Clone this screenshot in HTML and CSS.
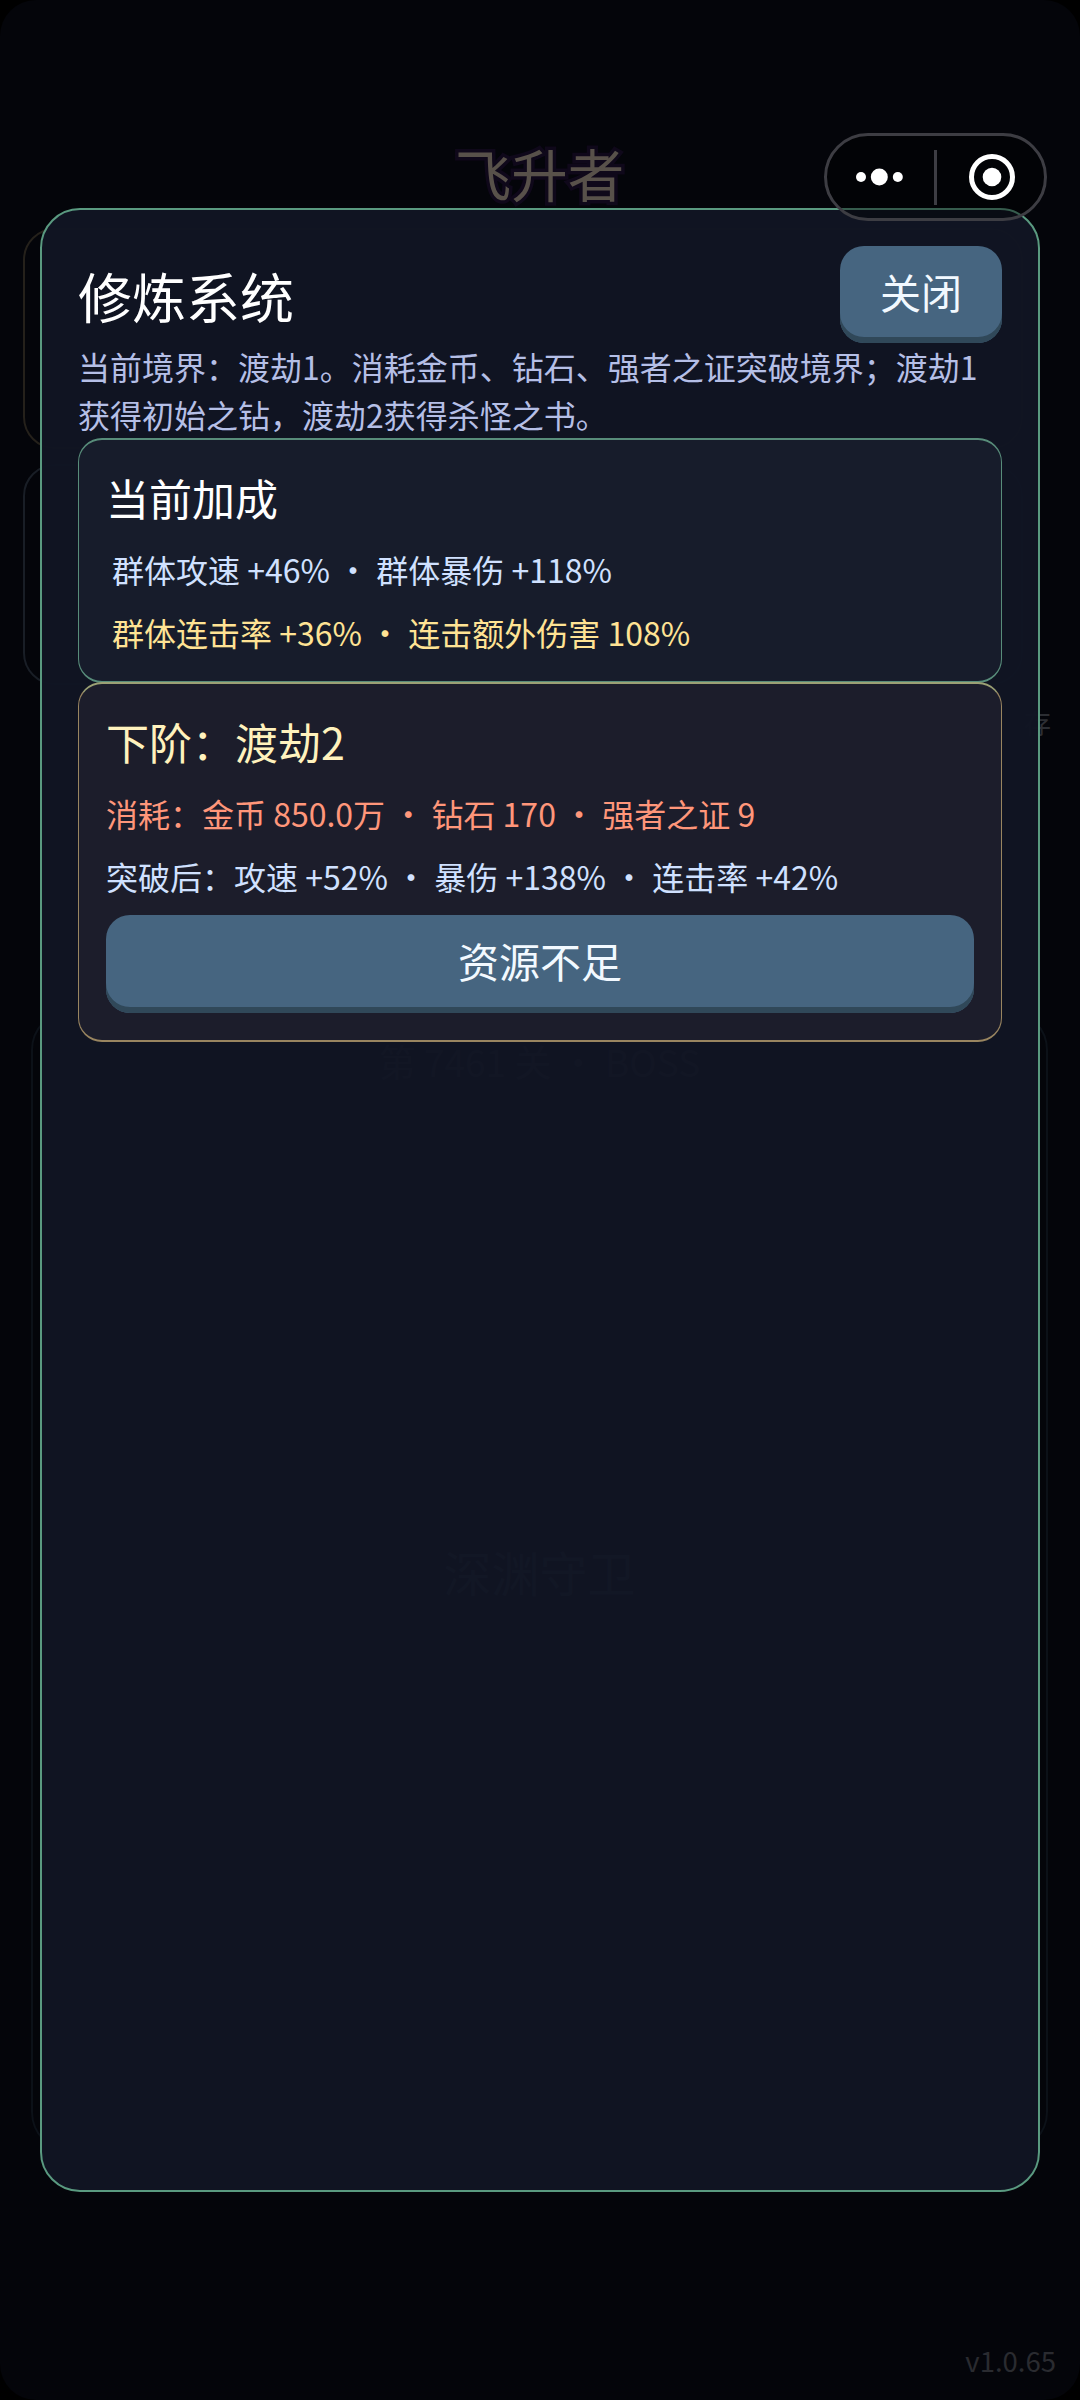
FILE: index.html
```html
<!DOCTYPE html>
<html lang="zh-CN">
<head>
<meta charset="utf-8">
<title>飞升者</title>
<link rel="stylesheet" href="styles.css">
</head>
<body>
<div class="screen">
  <main class="game">
    <h1 class="game-title">飞升者</h1>
    <section class="hud hud-gold"></section>
    <section class="hud hud-plain"></section>
    <p class="save">存</p>
    <section class="stage">
      <p class="stage-level">第 7461 关 · BOSS</p>
      <h2 class="stage-enemy">深渊守卫</h2>
    </section>
    <footer class="version">v1.0.65</footer>
  </main>

  <div class="modal">
    <header class="modal-head">
      <h2 class="modal-title">修炼系统</h2>
      <button class="btn btn-close">关闭</button>
    </header>
    <p class="desc">当前境界：渡劫1。消耗金币、钻石、强者之证突破境界；渡劫1获得初始之钻，渡劫2获得杀怪之书。</p>
    <section class="card card-green">
      <h3 class="card-title">当前加成</h3>
      <p class="row row-indent blue">群体攻速 +46% · 群体暴伤 +118%</p>
      <p class="row row-indent yellow">群体连击率 +36% · 连击额外伤害 108%</p>
    </section>
    <section class="card card-gold">
      <h3 class="card-title cream">下阶：渡劫2</h3>
      <p class="row red">消耗：金币 850.0万 · 钻石 170 · 强者之证 9</p>
      <p class="row blue">突破后：攻速 +52% · 暴伤 +138% · 连击率 +42%</p>
      <button class="btn btn-wide">资源不足</button>
    </section>
  </div>

  <div class="capsule">
    <svg class="capsule-icon" width="45" height="20" viewBox="0 0 45 20" fill="#fff">
      <circle cx="5" cy="10" r="5"/><circle cx="23.3" cy="10" r="8.5"/><circle cx="41.8" cy="10" r="5"/>
    </svg>
    <span class="capsule-line"></span>
    <svg class="capsule-icon" width="46" height="48" viewBox="1 0 46 48">
      <circle cx="24" cy="24" r="20.5" fill="none" stroke="#fff" stroke-width="5"/><circle cx="24" cy="24" r="9.3" fill="#fff"/>
    </svg>
  </div>
</div>
</body>
</html>
```
FILE: styles.css
```css
* { box-sizing: border-box; margin: 0; padding: 0; }
body {
  background: #000;
  font-family: "Noto Sans CJK SC", sans-serif;
  font-weight: 400;
}
h1, h2, h3, button { font: inherit; }

.screen {
  position: relative;
  width: 1080px;
  height: 2400px;
  overflow: hidden;
  border-radius: 36px;
  background: #04050a;
}

/* dimmed game page */
.game {
  display: flex;
  flex-direction: column;
  height: 100%;
  padding: 136px 24px 20px 23px;
}
.game-title {
  height: 92px;
  line-height: 72px;
  text-align: center;
  font-size: 56.5px;
  color: #58514a;
  -webkit-text-stroke: 7px #0f081a;
  paint-order: stroke fill;
}
.hud {
  width: 1000px;
  height: 221px;
  border: 2px solid;
  border-radius: 32px;
}
.hud-gold { border-color: #25211b; }
.hud-plain { border-color: #191e26; margin-top: 15px; }
.save {
  height: 325px;
  padding: 18px 5px 0 0;
  line-height: 40px;
  text-align: right;
  font-size: 27px;
  color: #2c2e33;
}
.stage {
  height: 1142px;
  margin: 0 8px;
  border: 2px solid #0c1118;
  border-radius: 40px;
  text-align: center;
}
.stage-level { margin-top: 25px; font-size: 37px; line-height: 48px; color: #444853; }
.stage-enemy { margin-top: 450px; font-size: 48px; line-height: 72px; color: #555a66; }
.version {
  margin-top: auto;
  line-height: 40px;
  text-align: right;
  font-size: 27.5px;
  color: #2a2b30;
}

/* dialog */
.modal {
  position: absolute;
  top: 208px;
  left: 40px;
  width: 1000px;
  height: 1984px;
  padding: 36px;
  border: 2px solid #5a9a80;
  border-radius: 40px;
  background: rgba(17, 21, 35, 0.97);
}
.modal-head {
  display: flex;
  justify-content: space-between;
  height: 97px;
}
.modal-title { font-size: 54px; line-height: 100px; color: #fff; }
.btn {
  display: block;
  border: 0;
  border-radius: 24px;
  background: #466580;
  box-shadow: inset 0 -6px #304859;
  color: #f2f9ff;
  font-size: 41px;
  text-align: center;
}
.btn-close { width: 162px; height: 97px; padding-bottom: 8px; }
.btn-wide { width: 100%; height: 98px; margin-top: 7px; padding-bottom: 8px; }
.desc {
  height: 96px;
  margin-top: -1px;
  font-size: 32px;
  line-height: 48px;
  color: #b5bfe6;
}
.card {
  padding: 25px 27px 27px;
  border: solid;
  border-width: 2px 1px;
  border-radius: 24px;
}
.card-green { height: 245px; border-color: #588c7a; background: #171c2b; }
.card-gold {
  height: 360px;
  margin-top: -1px;
  border-color: #9ba074 #998560 #998560;
  background: #1c1d2b;
}
.card-title { height: 73px; font-size: 43px; line-height: 64px; color: #fff; }
.row { font-size: 32px; line-height: 63px; white-space: nowrap; }
.row-indent { padding-left: 6px; }
.cream { color: #fff2bd; }
.blue { color: #d0e1ff; }
.yellow { color: #ffe394; }
.red { color: #ff967a; }

/* host app menu */
.capsule {
  position: absolute;
  top: 133px;
  left: 824px;
  display: flex;
  align-items: center;
  justify-content: space-between;
  width: 223px;
  height: 88px;
  padding: 0 29px;
  border: 3px solid #3d3d43;
  border-radius: 44px;
  background: rgba(0, 0, 0, 0.4);
}
.capsule-icon { overflow: visible; }
.capsule-line { width: 3px; height: 55px; background: #3d3d43; }
```
